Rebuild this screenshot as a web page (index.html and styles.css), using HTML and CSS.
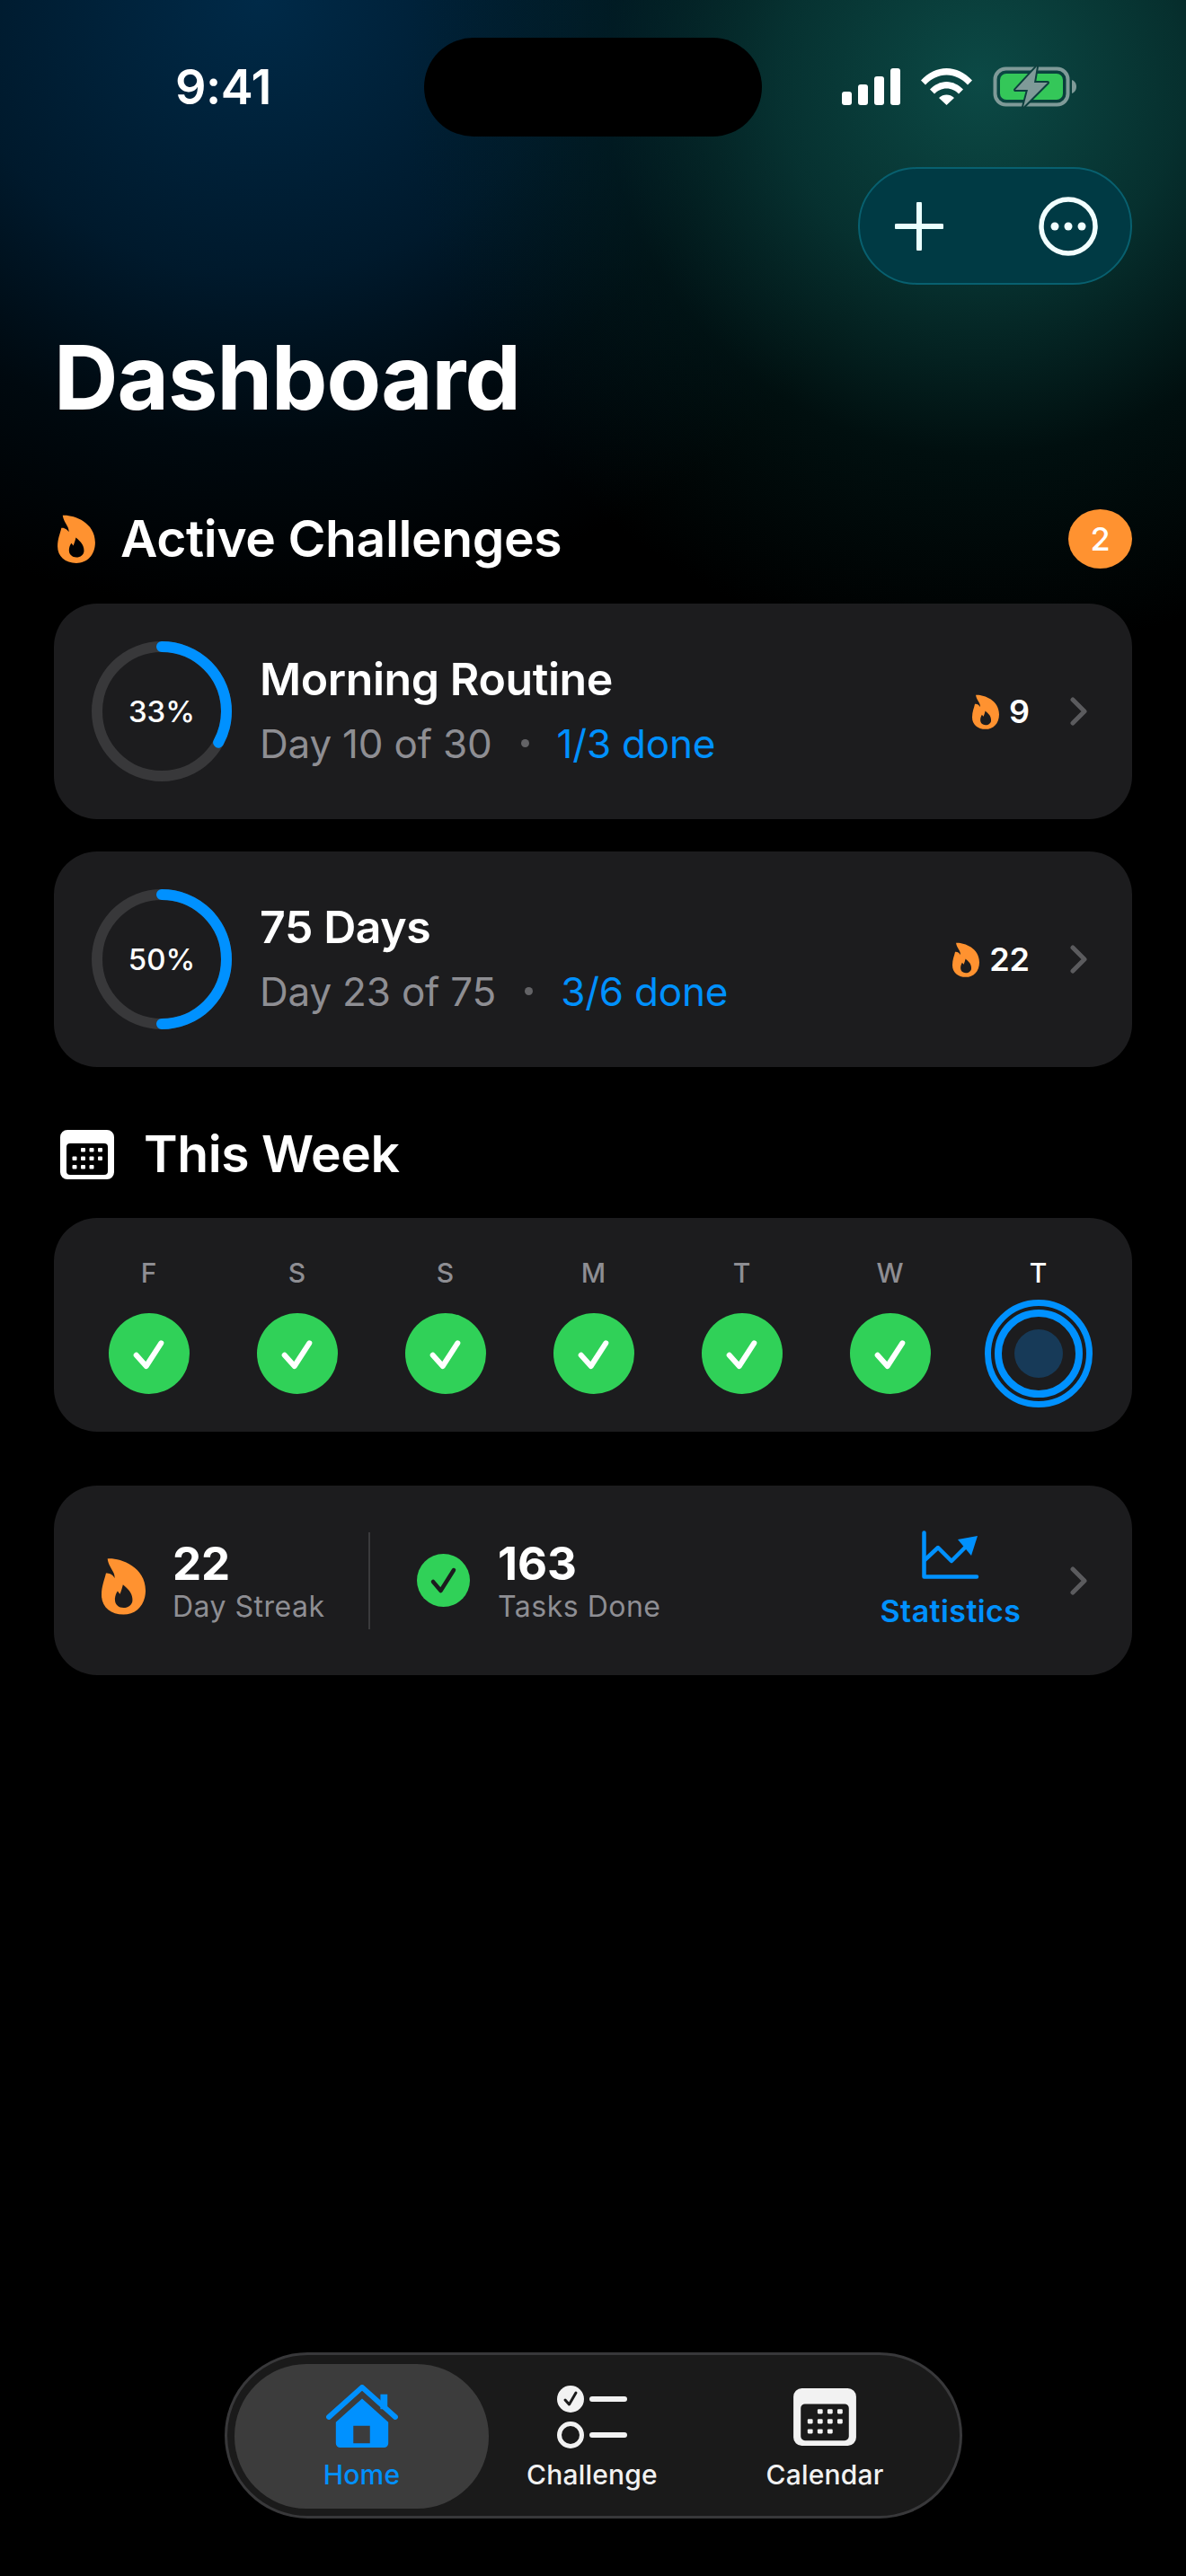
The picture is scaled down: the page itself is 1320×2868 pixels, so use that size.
FILE: index.html
```html
<!DOCTYPE html>
<html lang="en">
<head>
<meta charset="utf-8">
<title>Dashboard</title>
<link rel="stylesheet" href="styles.css">
</head>
<body>
<svg class="defs" aria-hidden="true">
  <symbol id="flame" viewBox="0 0 148 191">
    <path fill="#ff9230" fill-rule="evenodd" d="M20 3C55-1 148 25 148 110C148 160 115 191 74 191C30 191 0 165 0 125C0 95 10 75 15 52C28 50 40 60 44 68C46 45 25 35 20 3ZM72 90C90 105 104 118 104 142C104 158 90 168 74 168C58 168 45 158 45 140C45 128 50 118 54 112C58 116 60 120 62 122C66 112 70 100 72 90Z"/>
  </symbol>
  <symbol id="cal" viewBox="0 0 60 55">
    <path fill="currentColor" fill-rule="evenodd" d="M8 0H52A8 8 0 0 1 60 8V47A8 8 0 0 1 52 55H8A8 8 0 0 1 0 47V8A8 8 0 0 1 8 0ZM11 15A4 4 0 0 0 7 19V46A4 4 0 0 0 11 50H49A4 4 0 0 0 53 46V19A4 4 0 0 0 49 15Z"/>
    <g fill="currentColor">
      <rect x="23" y="20" width="5" height="4.4" rx="1"/><rect x="32.500" y="20" width="5" height="4.400" rx="1"/><rect x="42" y="20" width="5" height="4.400" rx="1"/>
      <rect x="13.500" y="29.500" width="5" height="4.400" rx="1"/><rect x="23" y="29.500" width="5" height="4.400" rx="1"/><rect x="32.500" y="29.500" width="5" height="4.400" rx="1"/><rect x="42" y="29.500" width="5" height="4.400" rx="1"/>
      <rect x="13.500" y="39" width="5" height="4.400" rx="1"/><rect x="23" y="39" width="5" height="4.400" rx="1"/><rect x="32.500" y="39" width="5" height="4.400" rx="1"/>
    </g>
  </symbol>
  <symbol id="chev" viewBox="0 0 19 32">
    <path d="M3 3L16 16L3 29" fill="none" stroke="#5b5b5e" stroke-width="5" stroke-linecap="round" stroke-linejoin="round"/>
  </symbol>
  <symbol id="tick" viewBox="0 0 90 90">
    <path d="M30.700 46.700L41.700 59L58.300 33.300" fill="none" stroke="#fff" stroke-width="6" stroke-linecap="round" stroke-linejoin="round"/>
  </symbol>
</svg>

<main class="screen">
  <div class="island"></div>

  <header class="status">
    <span class="time">9:41</span>
    <div class="status-icons">
      <svg class="signal" viewBox="0 0 65 41"><rect x="0" y="26" width="11" height="15" rx="3"/><rect x="18" y="18" width="11" height="23" rx="3"/><rect x="36" y="9" width="11" height="32" rx="3"/><rect x="54" y="0" width="11" height="41" rx="3"/></svg>
      <svg class="wifi" viewBox="0 0 57 41"><path d="M0 13.500C8 5 18 0 28.500 0S49 5 57 13.500L52 18.500C45.500 11.500 37.500 7.500 28.500 7.500S11.500 11.500 5 18.500Z"/><path d="M10 23.500C15 18.500 21.500 15 28.500 15S42 18.500 47 23.500L42 28.500C38.500 25 34 22.500 28.500 22.500S18.500 25 15 28.500Z"/><path d="M20 33C22.500 30.500 25.500 29.500 28.500 29.500S34.500 30.500 37 33L28.500 41Z"/></svg>
      <svg class="battery" viewBox="0 0 92 43">
        <rect x="1.500" y="1.500" width="81" height="40" rx="12" fill="none" stroke="#7f9a98" stroke-width="4"/>
        <path d="M87 14C90 15 92 18 92 21.500S90 28 87 29Z" fill="#7f9a98"/>
        <rect x="7" y="7" width="70" height="29" rx="7" fill="#34c759"/>
        <path d="M48 -1L24 25H38L33 44L60 17H45Z" fill="#7f9a98" stroke="#0d3f3e" stroke-width="4" stroke-linejoin="round" paint-order="stroke"/>
      </svg>
    </div>
  </header>

  <div class="toolbar">
    <div class="pill">
      <svg class="plus" viewBox="0 0 54 54"><path d="M27 2V52M2 27H52" fill="none" stroke="#eaffff" stroke-width="6" stroke-linecap="round"/></svg>
      <svg class="more" viewBox="0 0 66 66"><circle cx="33" cy="33" r="30" fill="none" stroke="#f1ffff" stroke-width="5.500"/><circle cx="18" cy="33" r="4.500" fill="#f1ffff"/><circle cx="33" cy="33" r="4.500" fill="#f1ffff"/><circle cx="48" cy="33" r="4.500" fill="#f1ffff"/></svg>
    </div>
  </div>

  <h1 class="title">Dashboard</h1>

  <section class="section-head first">
    <svg class="head-flame"><use href="#flame"/></svg>
    <h2>Active Challenges</h2>
    <span class="badge">2</span>
  </section>

  <article class="card challenge">
    <div class="ring">
      <svg viewBox="0 0 156 156"><circle cx="78" cy="78" r="72" class="track"/><circle cx="78" cy="78" r="72" class="prog" pathLength="100" stroke-dasharray="33 100" transform="rotate(-90 78 78)"/></svg>
      <span>33%</span>
    </div>
    <div class="info">
      <h3>Morning Routine</h3>
      <p class="sub"><span>Day 10 of 30</span><i class="dot"></i><b>1/3 done</b></p>
    </div>
    <div class="streak"><svg class="small-flame"><use href="#flame"/></svg><span>9</span></div>
    <svg class="chev"><use href="#chev"/></svg>
  </article>

  <article class="card challenge second">
    <div class="ring">
      <svg viewBox="0 0 156 156"><circle cx="78" cy="78" r="72" class="track"/><circle cx="78" cy="78" r="72" class="prog" pathLength="100" stroke-dasharray="50 100" transform="rotate(-90 78 78)"/></svg>
      <span>50%</span>
    </div>
    <div class="info">
      <h3>75 Days</h3>
      <p class="sub"><span>Day 23 of 75</span><i class="dot"></i><b>3/6 done</b></p>
    </div>
    <div class="streak"><svg class="small-flame"><use href="#flame"/></svg><span>22</span></div>
    <svg class="chev"><use href="#chev"/></svg>
  </article>

  <section class="section-head week-head">
    <svg class="head-cal"><use href="#cal"/></svg>
    <h2>This Week</h2>
  </section>

  <div class="card week">
    <div class="day"><span>F</span><div class="done"><svg><use href="#tick"/></svg></div></div>
    <div class="day"><span>S</span><div class="done"><svg><use href="#tick"/></svg></div></div>
    <div class="day"><span>S</span><div class="done"><svg><use href="#tick"/></svg></div></div>
    <div class="day"><span>M</span><div class="done"><svg><use href="#tick"/></svg></div></div>
    <div class="day"><span>T</span><div class="done"><svg><use href="#tick"/></svg></div></div>
    <div class="day"><span>W</span><div class="done"><svg><use href="#tick"/></svg></div></div>
    <div class="day today"><span>T</span><div class="now"><div class="now-inner"><div class="now-dot"></div></div></div></div>
  </div>

  <div class="card stats">
    <div class="stat streak-stat">
      <svg class="stat-flame"><use href="#flame"/></svg>
      <div class="stat-text"><strong>22</strong><small>Day Streak</small></div>
    </div>
    <div class="divider"></div>
    <div class="stat tasks-stat">
      <svg class="stat-check" viewBox="0 0 59 59"><circle cx="29.500" cy="29.500" r="29.500" fill="#30d158"/><path d="M18 31L26.500 41L41 18" fill="none" stroke="#1c1c1e" stroke-width="4.500" stroke-linecap="round" stroke-linejoin="round"/></svg>
      <div class="stat-text"><strong>163</strong><small>Tasks Done</small></div>
    </div>
    <div class="statistics">
      <svg viewBox="0 0 64 54"><path d="M2.500 2.500V51.500H61" fill="none" stroke="#0091ff" stroke-width="4.500" stroke-linecap="round" stroke-linejoin="round"/><path d="M3 33L18 19L33 34L50 17" fill="none" stroke="#0091ff" stroke-width="4.500" stroke-linejoin="round"/><path d="M40 10L62 6L55 28Z" fill="#0091ff"/></svg>
      <span>Statistics</span>
    </div>
    <svg class="chev"><use href="#chev"/></svg>
  </div>

  <nav class="tabbar">
    <a class="tab active">
      <svg class="tab-icon home" viewBox="0 0 84 74"><path d="M4 37L42 3L80 37" fill="none" stroke="#0091ff" stroke-width="6" stroke-linecap="round" stroke-linejoin="round"/><path d="M63 11H71V28H63Z" fill="#0091ff"/><path fill="#0091ff" fill-rule="evenodd" d="M42 16L72 43V67A5 5 0 0 1 67 72H17A5 5 0 0 1 12 67V43ZM32 47V67H51V47Z"/></svg>
      <span>Home</span>
    </a>
    <a class="tab">
      <svg class="tab-icon list" viewBox="0 0 78 70"><circle cx="15" cy="15" r="15" fill="#f2f2f2"/><path d="M9 16L13.500 21L21 8" fill="none" stroke="#1a1a1a" stroke-width="3" stroke-linecap="round" stroke-linejoin="round"/><circle cx="15" cy="55" r="12.500" fill="none" stroke="#f2f2f2" stroke-width="5"/><path d="M39 15H75M39 55H75" stroke="#f2f2f2" stroke-width="6" stroke-linecap="round"/></svg>
      <span>Challenge</span>
    </a>
    <a class="tab">
      <svg class="tab-icon calendar"><use href="#cal"/></svg>
      <span>Calendar</span>
    </a>
  </nav>
</main>
</body>
</html>
```

FILE: styles.css
```css
* { box-sizing: border-box; margin: 0; padding: 0; }
html, body { background: #000; }
body { width: 1320px; height: 2868px; overflow: hidden; font-family: Inter, "Liberation Sans", sans-serif; color: #fff; }
.defs { position: absolute; width: 0; height: 0; }
.screen {
  position: relative; height: 2868px; padding: 0 60px;
  background:
    radial-gradient(ellipse 640px 640px at 1090px 90px, rgba(12,76,72,.97) 0%, rgba(8,60,58,.8) 35%, rgba(2,34,34,.45) 65%, rgba(0,0,0,0) 100%),
    radial-gradient(ellipse 760px 680px at 290px 0px, rgba(0,42,72,1) 0%, rgba(0,30,52,.85) 45%, rgba(0,18,30,.5) 72%, rgba(0,0,0,0) 100%),
    #000;
}
.island { position: absolute; left: 472px; top: 42px; width: 376px; height: 110px; border-radius: 55px; background: #000; }
.status { height: 186px; display: flex; justify-content: space-between; padding: 64px 62px 0 135px; }
.time { font-size: 54px; font-weight: 600; line-height: 66px; letter-spacing: -.5px; }
.status-icons { display: flex; align-items: flex-start; padding-top: 12px; }
.status-icons svg { fill: #fff; display: block; }
.signal { width: 65px; height: 41px; }
.wifi { width: 57px; height: 41px; margin-left: 23px; }
.battery { width: 92px; height: 43px; margin-left: 24px; margin-top: -1px; overflow: visible; }
.toolbar { display: flex; justify-content: flex-end; }
.pill {
  width: 305px; height: 131px; border-radius: 66px; background: #003a44; border: 2px solid #08606f;
  display: flex; align-items: center; padding: 0 36px 0 39px; justify-content: space-between;
}
.plus { width: 54px; height: 54px; }
.more { width: 66px; height: 66px; }
.title { margin-top: 48px; font-size: 99px; font-weight: 700; line-height: 110px; letter-spacing: -1px; }
.section-head { display: flex; align-items: center; height: 70px; }
.section-head.first { margin-top: 90px; }
.section-head h2 { font-size: 57px; font-weight: 600; line-height: 70px; letter-spacing: -.4px; }
.head-flame { width: 42px; height: 54px; margin: 0 28px 0 4px; }
.badge { margin-left: auto; width: 71px; height: 66px; border-radius: 50%; background: #ff9230; font-size: 36px; font-weight: 500; display: flex; align-items: center; justify-content: center; }
.card { background: #1c1c1e; border-radius: 48px; }
.challenge { display: flex; align-items: center; height: 240px; padding: 0 50px 0 42px; margin-top: 37px; }
.challenge.second { margin-top: 36px; }
.ring { position: relative; width: 156px; height: 156px; flex: none; display: flex; align-items: center; justify-content: center; }
.ring svg { position: absolute; inset: 0; width: 156px; height: 156px; }
.ring span { position: relative; font-size: 33px; font-weight: 500; }
.track { fill: none; stroke: #38383a; stroke-width: 12; }
.prog { fill: none; stroke: #0091ff; stroke-width: 12; stroke-linecap: round; }
.info { margin-left: 31px; flex: 1; }
.info h3 { font-size: 50px; font-weight: 600; line-height: 60px; letter-spacing: -.4px; }
.sub { display: flex; align-items: center; font-size: 44px; line-height: 62px; margin-top: 11px; color: #8e8e93; letter-spacing: -.2px; }
.dot { width: 9px; height: 9px; border-radius: 50%; background: #636366; margin: 0 31px 0 32px; }
.sub b { font-weight: 400; color: #0091ff; }
.streak { display: flex; align-items: center; font-size: 36px; font-weight: 600; margin-right: 45px; }
.small-flame { width: 30px; height: 39px; margin-right: 11px; }
.chev { width: 19px; height: 32px; flex: none; }
.week-head { margin-top: 62px; }
.head-cal { width: 60px; height: 55px; margin: 0 33px 0 7px; color: #fff; }
.week { display: grid; grid-template-columns: repeat(7, 165px); height: 238px; margin-top: 36px; padding: 0 23px; }
.day { display: flex; flex-direction: column; align-items: center; padding-top: 42px; }
.day span { font-size: 30px; font-weight: 500; line-height: 38px; color: #8e8e93; }
.today span { color: #fff; }
.done { width: 90px; height: 90px; border-radius: 50%; background: #30d158; margin-top: 26px; }
.done svg { display: block; width: 90px; height: 90px; }
.now { width: 120px; height: 120px; border-radius: 50%; border: 7px solid #0091ff; margin-top: 11px; display: flex; align-items: center; justify-content: center; }
.now-inner { width: 98px; height: 98px; border-radius: 50%; border: 8px solid #0091ff; display: flex; align-items: center; justify-content: center; }
.now-dot { width: 54px; height: 54px; border-radius: 50%; background: #173a58; }
.stats { display: flex; align-items: center; height: 211px; margin-top: 60px; padding: 0 50px 0 53px; }
.stat { display: flex; align-items: center; }
.streak-stat { width: 297px; }
.stat-flame { width: 49px; height: 64px; margin: 12px 30px 0 0; flex: none; }
.stat-check { width: 59px; height: 59px; margin-right: 31px; flex: none; }
.stat-text { display: flex; flex-direction: column; padding-top: 2px; }
.stat-text strong { font-size: 51px; font-weight: 700; line-height: 56px; }
.stat-text small { font-size: 32px; line-height: 40px; color: #8e8e93; letter-spacing: .5px; }
.divider { width: 2px; height: 108px; background: #3a3a3c; margin-right: 52px; }
.statistics { margin-left: auto; margin-right: 57px; width: 152px; display: flex; flex-direction: column; align-items: center; }
.statistics svg { width: 64px; height: 54px; display: block; }
.statistics span { font-size: 34px; font-weight: 600; line-height: 42px; margin-top: 15px; color: #0091ff; letter-spacing: .4px; white-space: nowrap; }
.tabbar {
  position: absolute; left: 250px; top: 2619px; width: 821px; height: 185px; border-radius: 93px;
  background: #1a1a1a; border: 3px solid #38383a; padding: 10px 6px 0 8px;
  display: grid; grid-template-columns: 283px 230px 288px; grid-template-rows: 161px;
}
.tab { display: flex; flex-direction: column; align-items: center; padding-top: 23px; color: #f2f2f2; border-radius: 80px; }
.tab.active { background: #3c3c3c; color: #0091ff; }
.tab-icon { height: 72px; display: block; }
.home { width: 84px; }
.list { width: 78px; }
.calendar { width: 70px; height: 64px; margin: 4px 0; color: #f2f2f2; }
.tab span { font-size: 30px; font-weight: 500; line-height: 36px; margin-top: 10px; letter-spacing: .2px; }
```
